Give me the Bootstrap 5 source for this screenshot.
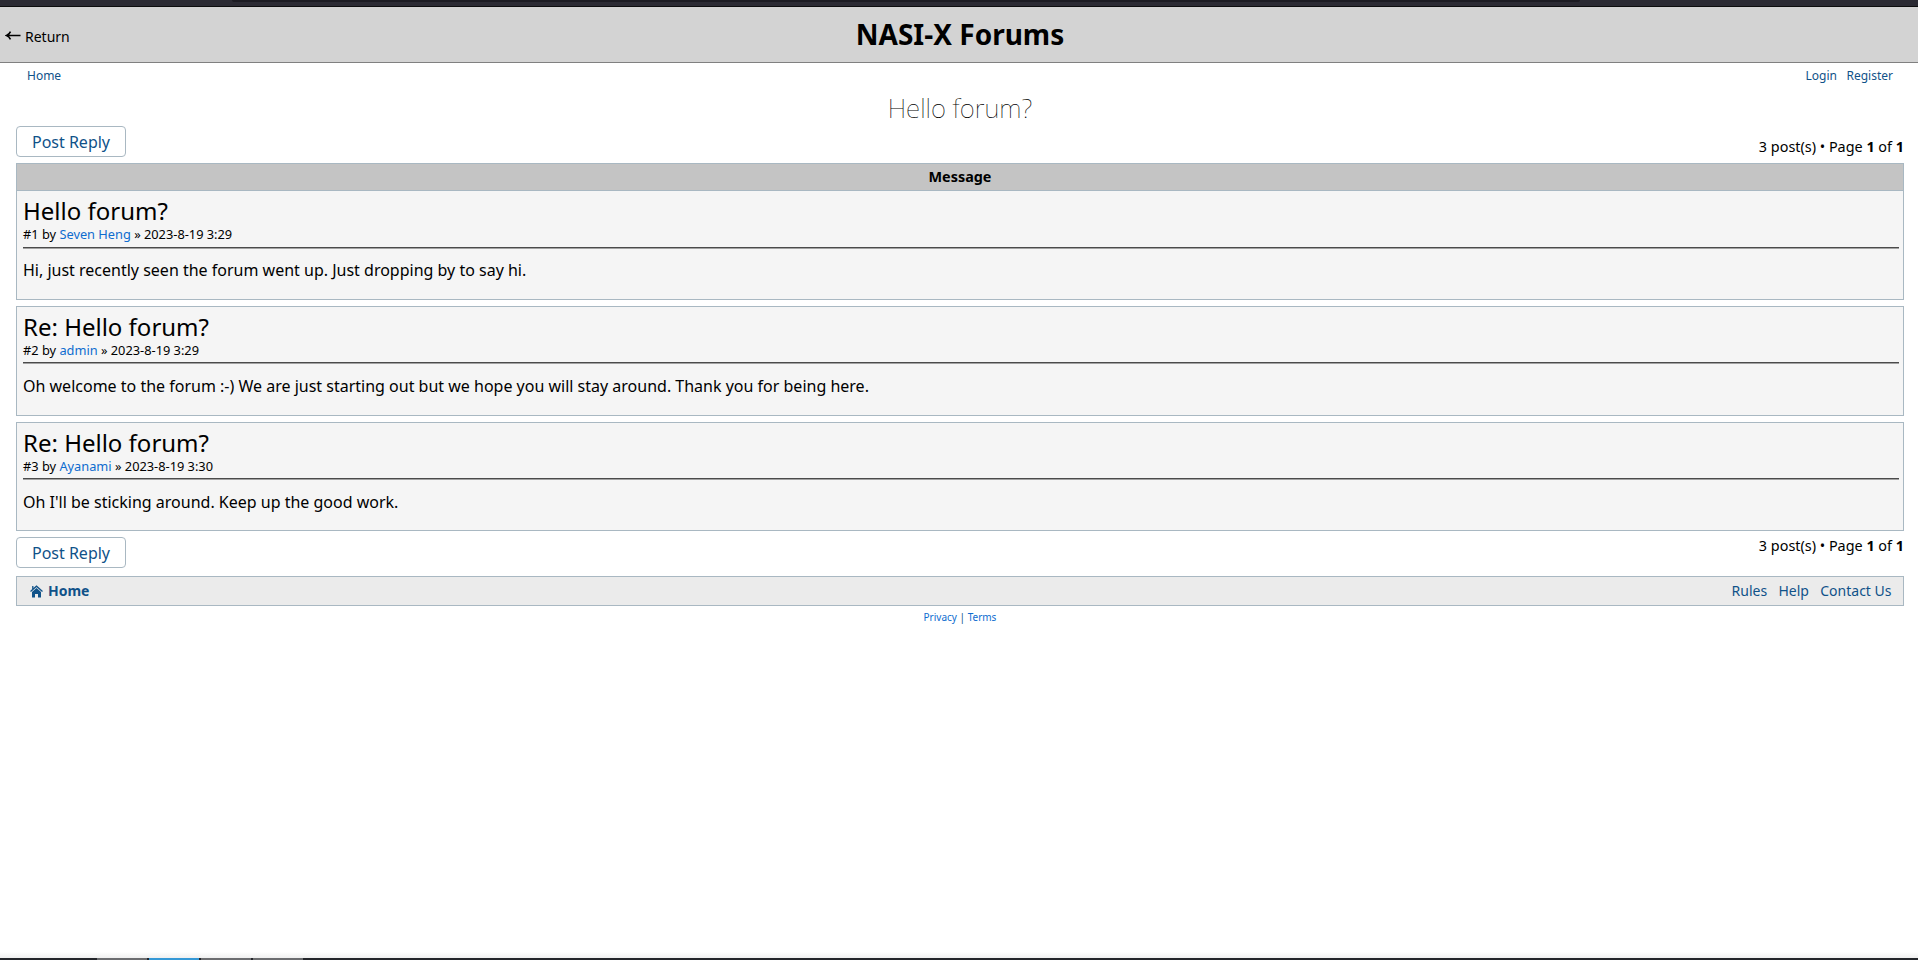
<!DOCTYPE html>
<html lang="en">
<head>
<meta charset="utf-8">
<meta name="viewport" content="width=device-width, initial-scale=1">
<title>NASI-X Forums</title>
<link rel="stylesheet" href="https://cdn.jsdelivr.net/npm/bootstrap@5.3.0/dist/css/bootstrap.min.css">
<style>
body{font-family:"Noto Sans",sans-serif;font-size:16px;line-height:22px;color:#000;background:#fff;height:960px;overflow:hidden}
a{text-decoration:none;color:#105289}
.window-top{height:7px;background:#2b2a33;border-bottom:1px solid #0c0c0d}
.address-strip{height:2px;width:1348px;margin-left:232px;background:#1c1b22;border-radius:0 0 3px 3px}
.masthead{height:56px;background:#d3d3d3;border-bottom:1px solid #808080;display:grid;grid-template-columns:1fr auto 1fr}
.masthead h1{font-size:28px;line-height:40px;font-weight:700;margin:7px 0 0 2px}
.back-link{color:#000;font-size:14px;line-height:20px;margin:20px 0 0 5px}
.back-link svg{margin:3px 4px 0 0}
.user-links{font-size:12px;line-height:18px;padding:4px 25px 0 27px;height:26px}
.user-nav{gap:9.5px}
.page-body{padding:0 14px 0 16px}
.topic-title{font-size:26px;line-height:39px;font-weight:100;margin:0;height:37px}
.reply-btn{width:110px;height:31px;border:1px solid #a9b8c2;border-radius:4px;padding:1px 0 0;font-size:16px;line-height:29px;color:#105289;background:#fff}
.page-count{font-size:14.4px;line-height:20px}
.count-top{margin-top:11px}
.count-bottom{margin-top:-1px}
.post-box{border:1px solid #a9b8c2;background:#f5f5f5;height:109.9px;padding:6px 4px 0 6px;margin-bottom:5.87px}
.list-head{height:27px;border:1px solid #a9b8c2;border-bottom:0;background:#c4c4c4;font-size:14.4px;font-weight:700;line-height:26px;margin-top:6px}
.post-box h2{font-size:24px;line-height:28px;font-weight:400;margin:0}
.post-meta{font-size:12.8px;line-height:18px}
.post-meta a,.legal a{color:#0d6ccf}
.post-rule{height:2px;background:linear-gradient(#4b4b4b 50%,#a2a2a2 50%);margin:3.6px 0 10.85px}
.foot-bar{height:30px;border:1px solid #a9b8c2;background:#ebebeb;font-size:14px;padding:0 11.5px 0 12.5px;margin-top:8px}
.legal{font-size:10px;line-height:16px;color:#105289;margin-top:3px}
.foot-links{gap:11.3px}
.house{margin-right:5.5px}
.taskbar{height:2px;background:#24262b;padding-left:97px;gap:2px}
.taskbar i{width:50px;background:#6c6d70}
.taskbar i.current{background:#3598d6}
.fade-edge{height:6px;background:linear-gradient(#fff,#f0f0f0)}
</style>
</head>
<body class="d-flex flex-column">
<div class="window-top"><div class="address-strip"></div></div>
<header class="masthead">
  <a href="#" class="back-link d-flex"><svg width="16" height="11" viewBox="0 0 16 11"><path d="M1.5 5.5H15.5M5.5 1.6Q4.2 4.5 1.5 5.5Q4.2 6.5 5.5 9.4" fill="none" stroke="#000" stroke-width="1.6"/></svg><span>Return</span></a>
  <h1>NASI-X Forums</h1>
</header>
<nav class="user-links d-flex justify-content-between"><a href="#">Home</a><div class="user-nav d-flex"><a href="#">Login</a><a href="#">Register</a></div></nav>
<main class="page-body">
  <h2 class="topic-title text-center">Hello forum?</h2>
  <div class="d-flex justify-content-between"><button class="btn reply-btn">Post Reply</button><div class="page-count count-top">3 post(s) • Page <b>1</b> of <b>1</b></div></div>
  <div class="list-head text-center">Message</div>
  <article class="post-box"><h2>Hello forum?</h2><div class="post-meta">#1 by <a href="#">Seven Heng</a> » 2023-8-19 3:29</div><div class="post-rule"></div><p class="mb-0">Hi, just recently seen the forum went up. Just dropping by to say hi.</p></article>
  <article class="post-box"><h2>Re: Hello forum?</h2><div class="post-meta">#2 by <a href="#">admin</a> » 2023-8-19 3:29</div><div class="post-rule"></div><p class="mb-0">Oh welcome to the forum :-) We are just starting out but we hope you will stay around. Thank you for being here.</p></article>
  <article class="post-box"><h2>Re: Hello forum?</h2><div class="post-meta">#3 by <a href="#">Ayanami</a> » 2023-8-19 3:30</div><div class="post-rule"></div><p class="mb-0">Oh I'll be sticking around. Keep up the good work.</p></article>
  <div class="d-flex justify-content-between"><button class="btn reply-btn">Post Reply</button><div class="page-count count-bottom">3 post(s) • Page <b>1</b> of <b>1</b></div></div>
  <footer>
    <div class="foot-bar d-flex justify-content-between align-items-center"><a href="#" class="d-flex align-items-center fw-bold"><svg class="house" width="13" height="13" viewBox="0 0 13 13" fill="#105289"><path d="M2 7L6.5 3L11 7V12.5H8V9H5V12.5H2Z"/><path d="M.5 6.5L6.5 1.2L12.5 6.5M2.8 4.4V1" fill="none" stroke="#105289" stroke-width="1.3"/></svg><span>Home</span></a><div class="d-flex foot-links"><a href="#">Rules</a><a href="#">Help</a><a href="#">Contact Us</a></div></div>
    <div class="legal text-center"><a href="#">Privacy</a> | <a href="#">Terms</a></div>
  </footer>
</main>
<div class="mt-auto"><div class="fade-edge"></div><div class="taskbar d-flex"><i></i><i class="current"></i><i></i><i></i></div></div>
<script src="https://cdn.jsdelivr.net/npm/bootstrap@5.3.0/dist/js/bootstrap.bundle.min.js"></script>
</body>
</html>
